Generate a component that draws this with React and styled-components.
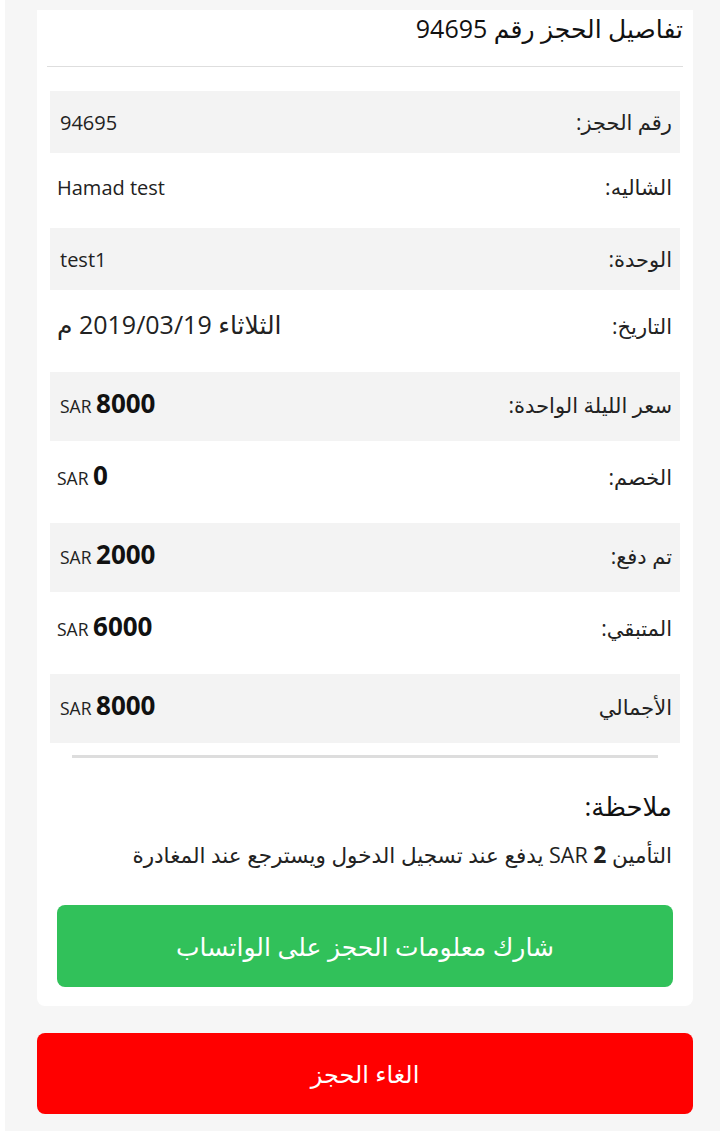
import React from "react";
import styled, { createGlobalStyle } from "styled-components";

const Global = createGlobalStyle`
  html, body { margin: 0; padding: 0; background: #ffffff; }
  body { font-family: "Open Sans", "DejaVu Sans", sans-serif; color: #222; }
  * { box-sizing: border-box; }
`;

const Page = styled.div`
  margin-left: 5px;
  height: 1131px;
  background: #f6f6f6;
  padding: 10px 27px 0 32px;
  direction: rtl;
  display: flex;
  flex-direction: column;
`;

const Card = styled.div`
  background: #fff;
  border-radius: 0 0 8px 8px;
  padding: 0 0 19px;
  display: flex;
  flex-direction: column;
`;

const Title = styled.h1`
  margin: 0 10px;
  height: 36px;
  font-size: 25px;
  font-weight: 400;
  line-height: 36px;
  color: #111;
`;

const Divider = styled.hr`
  margin: 20px 10px 24px;
  border: 0;
  border-top: 1px solid #dedede;
  height: 0;
`;

const Rows = styled.div`
  margin: 0 13px;
  display: flex;
  flex-direction: column;
`;

const Row = styled.div`
  display: flex;
  justify-content: space-between;
  align-items: baseline;
  height: ${(p) => p.$h}px;
  padding: ${(p) => (p.$shade ? 16 : 19)}px 8px 0 ${(p) => (p.$shade ? 10 : 7)}px;
  background: ${(p) => (p.$shade ? "#f3f3f3" : "#ffffff")};
`;

const Label = styled.span`
  font-size: 21px;
  line-height: 30px;
  color: #222;
`;

const Value = styled.span`
  font-size: ${(p) => (p.$big ? 25 : 20)}px;
  line-height: 30px;
  color: #222;
`;

const Amount = styled.span`
  direction: ltr;
  font-size: 17.5px;
  line-height: 30px;
  color: #222;
  b {
    font-size: 26px;
    font-weight: 700;
    color: #111;
  }
`;

const Rule = styled.div`
  margin: 12px 35px 0;
  height: 3px;
  background: #dddddd;
`;

const NoteTitle = styled.h2`
  margin: 31px 21px 0;
  font-size: 26px;
  font-weight: 400;
  line-height: 34px;
  color: #111;
`;

const NoteText = styled.p`
  margin: 15px 21px 0;
  font-size: 21.5px;
  line-height: 32px;
  color: #222;
  b { font-size: 23px; font-weight: 700; }
`;

const Button = styled.button`
  display: flex;
  align-items: center;
  justify-content: center;
  height: ${(p) => p.$h}px;
  border: 0;
  border-radius: 8px;
  background: ${(p) => p.$bg};
  color: #fff;
  font-family: inherit;
  font-size: ${(p) => p.$fs}px;
  font-weight: 400;
  cursor: pointer;
`;

const ShareButton = styled(Button)`
  margin: 34px 20px 0;
`;

const CancelButton = styled(Button)`
  margin-top: 27px;
`;

const rows = [
  { label: "رقم الحجز:", value: "94695", h: 62, shade: true },
  { label: "الشاليه:", value: "Hamad test", h: 75 },
  { label: "الوحدة:", value: "test1", h: 62, shade: true },
  { label: "التاريخ:", value: "الثلاثاء 2019/03/19 م", h: 82, big: true },
  { label: "سعر الليلة الواحدة:", amount: "8000", h: 69, shade: true },
  { label: "الخصم:", amount: "0", h: 82 },
  { label: "تم دفع:", amount: "2000", h: 69, shade: true },
  { label: "المتبقي:", amount: "6000", h: 82 },
  { label: "الأجمالي", amount: "8000", h: 69, shade: true },
];

export default function App() {
  return (
    <>
      <Global />
      <Page>
        <Card>
          <Title>تفاصيل الحجز رقم 94695</Title>
          <Divider />
          <Rows>
            {rows.map((r, i) => (
              <Row key={i} $h={r.h} $shade={r.shade}>
                <Label>{r.label}</Label>
                {r.amount !== undefined ? (
                  <Amount>
                    SAR <b>{r.amount}</b>
                  </Amount>
                ) : (
                  <Value $big={r.big}>{r.value}</Value>
                )}
              </Row>
            ))}
          </Rows>
          <Rule />
          <NoteTitle>ملاحظة:</NoteTitle>
          <NoteText>
            التأمين <b>2</b> SAR يدفع عند تسجيل الدخول ويسترجع عند المغادرة
          </NoteText>
          <ShareButton $h={82} $bg="#31c15a" $fs={25}>
            شارك معلومات الحجز على الواتساب
          </ShareButton>
        </Card>
        <CancelButton $h={81} $bg="#ff0000" $fs={24}>
          الغاء الحجز
        </CancelButton>
      </Page>
    </>
  );
}
